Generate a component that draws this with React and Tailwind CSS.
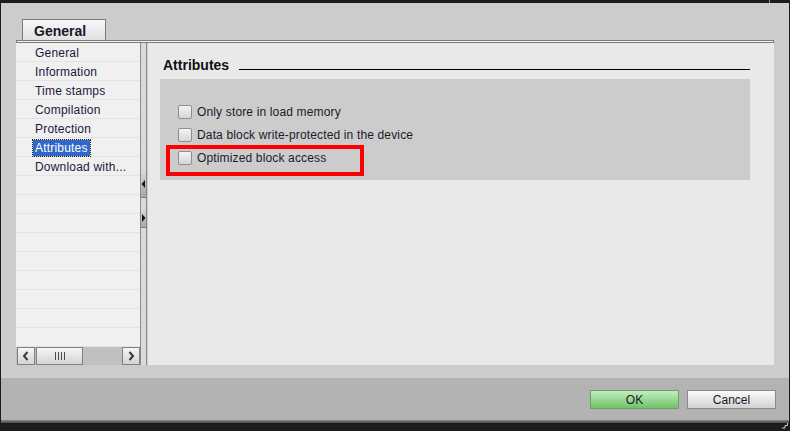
import { useState } from 'react';

const font = { fontFamily: '"Liberation Sans", Arial, sans-serif' };

const navItems = ['General', 'Information', 'Time stamps', 'Compilation', 'Protection', 'Attributes', 'Download with...'];

const options = ['Only store in load memory', 'Data block write-protected in the device', 'Optimized block access'];

function Chevron({ dir }) {
  return (
    <svg width="8" height="10" viewBox="0 0 8 10">
      {dir === 'left' ? (
        <path d="M5.5 1 L2 5 L5.5 9" fill="none" stroke="#3a3a3a" strokeWidth="2" />
      ) : (
        <path d="M2.5 1 L6 5 L2.5 9" fill="none" stroke="#3a3a3a" strokeWidth="2" />
      )}
    </svg>
  );
}

function Checkbox({ onChange }) {
  return (
    <button
      onClick={onChange}
      className="w-[14px] h-[14px] rounded-[2px] border border-[#8e8e8e] bg-gradient-to-b from-[#f4f4f4] to-[#d6d6d6] flex-shrink-0"
    />
  );
}

export default function App() {
  const [checked, setChecked] = useState([false, false, false]);
  const rows = Array.from({ length: 16 });

  return (
    <div className="w-[790px] h-[431px] bg-[#1c1c1c] flex flex-col overflow-hidden" style={font}>
      {/* top strip */}
      <div className="h-[3px] flex">
        <div className="w-[769px]" />
        <div className="w-px bg-[#8a8a8a]" />
      </div>

      <div className="flex-1 flex flex-col mx-px">
        {/* dialog body */}
        <div className="h-[375px] bg-[#cccccc] pl-[15px] pt-[16px] flex flex-col">
          {/* tab */}
          <div className="ml-[6px] w-[84px] h-[21px] border border-b-0 border-[#7a7a7a] bg-gradient-to-b from-[#f7f7f7] to-[#e1e1e1] pl-[11px] pt-[2px] flex items-center">
            <span className="text-[14px] font-bold text-[#14182a] leading-none">General</span>
          </div>

          {/* frame */}
          <div className="w-[758px] h-[325px] flex flex-col">
            <div className="h-[3px] border-y border-x border-[#7b7b7b] bg-[#f2f2f2]" />
            <div className="flex-1 flex">
              {/* nav list */}
              <div className="w-[124px] flex flex-col bg-[#f0f0f0]">
                <div className="h-[304px] overflow-hidden">
                  {rows.map((_, i) => (
                    <div key={i} className="h-[19px] border-b border-[#e3e3e3] flex items-center pt-[2px]">
                      {navItems[i] && (
                        <span
                          className={
                            i === 5
                              ? 'ml-[17px] px-[2px] h-[16px] flex items-center bg-[#3168c8] text-white text-[12px] tracking-[0.2px] outline-1 outline-dotted outline-[#1a1a1a]'
                              : 'ml-[19px] text-[12px] tracking-[0.2px] text-[#1a1a3a]'
                          }
                        >
                          {navItems[i]}
                        </span>
                      )}
                    </div>
                  ))}
                </div>
                {/* horizontal scrollbar */}
                <div className="h-[18px] bg-[#c0c0c0] flex">
                  <div className="ml-px w-[18px] h-[18px] border border-[#808080] bg-gradient-to-b from-[#f5f5f5] to-[#d4d4d4] flex items-center justify-center">
                    <Chevron dir="left" />
                  </div>
                  <div className="ml-px w-[47px] h-[18px] border border-[#808080] bg-gradient-to-b from-[#f5f5f5] to-[#d4d4d4] flex items-center justify-center gap-[2px]">
                    <div className="w-px h-[8px] bg-[#4a4a4a]" />
                    <div className="w-px h-[8px] bg-[#4a4a4a]" />
                    <div className="w-px h-[8px] bg-[#4a4a4a]" />
                    <div className="w-px h-[8px] bg-[#4a4a4a]" />
                  </div>
                  <div className="flex-1" />
                  <div className="w-[18px] h-[18px] border border-[#808080] bg-gradient-to-b from-[#f5f5f5] to-[#d4d4d4] flex items-center justify-center">
                    <Chevron dir="right" />
                  </div>
                </div>
              </div>

              {/* splitter strip */}
              <div className="w-[7px] border-x border-[#8a8a8a] bg-[#dadada] flex flex-col">
                <div className="h-[127px]" />
                <div className="h-[28px] bg-gradient-to-b from-[#dcdcdc] to-[#a6a6a6] border-b border-[#7a7a7a] flex items-center">
                  <svg width="5" height="8" viewBox="0 0 5 8"><path d="M4 0 L0.5 4 L4 8 Z" fill="#111" /></svg>
                </div>
                <div className="h-[10px]" />
                <div className="h-[20px] bg-gradient-to-b from-[#dcdcdc] to-[#a6a6a6] border-b border-[#7a7a7a] flex items-center">
                  <svg width="5" height="8" viewBox="0 0 5 8"><path d="M1 0 L4.5 4 L1 8 Z" fill="#111" /></svg>
                </div>
              </div>
              <div className="w-px bg-[#cccccc]" />

              {/* right panel */}
              <div className="flex-1 bg-[#e9e9e9] flex flex-col">
                <div className="mt-[14px] ml-[15px] w-[587px] h-[16px] flex items-end">
                  <span className="text-[14px] font-bold text-[#111] leading-[16px]">Attributes</span>
                  <div className="flex-1 ml-[10px] mb-[3px] h-px bg-[#000]" />
                </div>
                <div className="relative mt-[6px] ml-[12px] w-[590px] h-[101px] bg-[#cccccc] pt-[21px] pl-[18px]">
                  {options.map((opt, i) => (
                    <div key={opt} className="h-[23px] flex items-center gap-[5px]">
                      <Checkbox onChange={() => setChecked(checked.map((c, j) => (j === i ? !c : c)))} />
                      <span className="text-[12px] tracking-[0.15px] text-[#1a1a2a]">{opt}</span>
                    </div>
                  ))}
                  <div className="absolute left-[6px] top-[66px] w-[198px] h-[31px] border-4 border-[#ff0000]" />
                </div>
              </div>
            </div>
          </div>
        </div>

        {/* footer */}
        <div className="h-[42px] bg-[#b3b3b3] flex justify-end items-start pt-[12px] pr-[13px] gap-[8px]">
          <button className="w-[89px] h-[19px] border border-[#6f9d6b] bg-gradient-to-b from-[#c4ecbf] to-[#6cc467] text-[12px] text-[#1a1a2a] leading-none">
            OK
          </button>
          <button className="w-[89px] h-[19px] border border-[#8a8a8a] bg-gradient-to-b from-[#fbfbfb] to-[#d2d2d2] text-[12px] text-[#1a1a2a] leading-none">
            Cancel
          </button>
        </div>
        <div className="h-[3px] bg-gradient-to-b from-[#8a8a8a] to-[#4a4a4a]" />
      </div>

      {/* bottom strip */}
      <div className="h-[8px] flex justify-end pr-[2px]">
        <svg width="6" height="8" viewBox="0 0 6 8">
          <path d="M5.5 0 V2.5 H3 V5 H0" fill="none" stroke="#d0d0d0" strokeWidth="1" />
        </svg>
      </div>
    </div>
  );
}
